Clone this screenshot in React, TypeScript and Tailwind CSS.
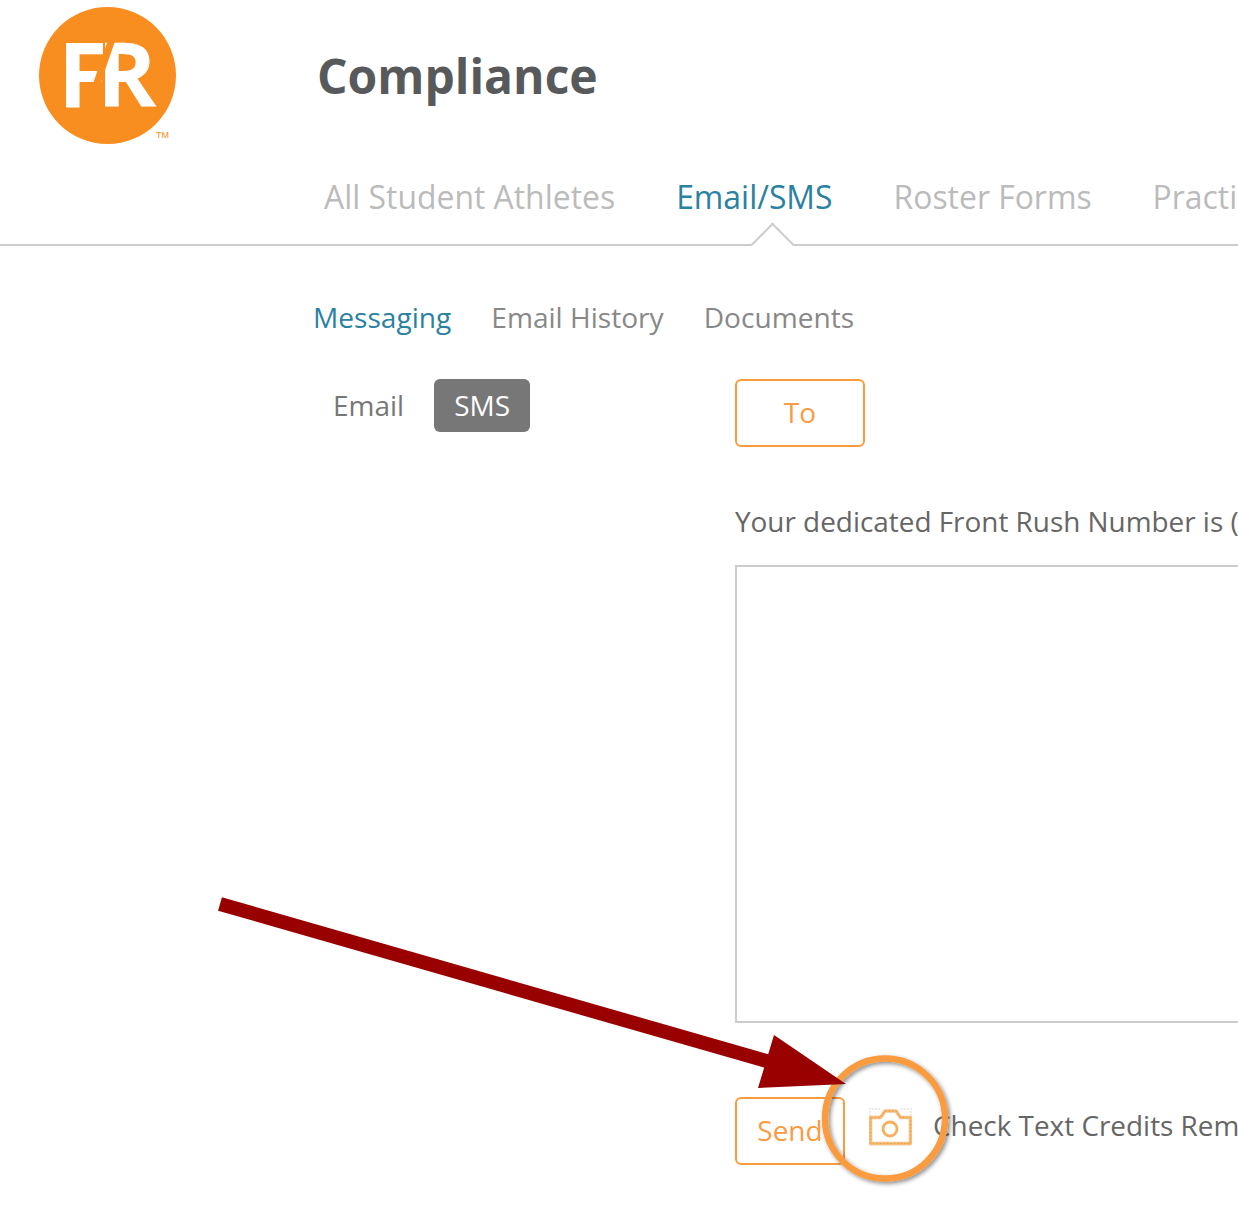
const orange = 'border-[#fb9b3f] text-[#fb9b3f]';

function Logo() {
  return (
    <div className="relative h-[137px] w-[137px] shrink-0 overflow-hidden rounded-full bg-[#f98e20] font-['Open_Sans',sans-serif] text-[90px] font-bold leading-none text-white">
      <span className="absolute left-[19px] top-[20px]">F</span>
      <span className="absolute left-[58px] top-[20px]">R</span>
      <span className="absolute left-[62px] top-[29px] h-[50px] w-[7px] rotate-[19deg] bg-[#f98e20]" />
    </div>
  );
}

function CameraIcon() {
  return (
    <svg width="43" height="38" viewBox="0 0 43 38" fill="none" className="shrink-0" aria-hidden>
      <path d="M1 8V1h10M32 1h10v7M1 37h41" stroke="#eeebe6" strokeWidth="2" strokeDasharray="2 1" />
      <path
        d="M1.500 9.500h10L16 3h11l4.500 6.500h10v26h-40z"
        fill="#fff"
        stroke="#f7c48a"
        strokeWidth="3.500"
        strokeLinejoin="round"
      />
      <path
        d="M1.500 9.500h10L16 3h11l4.500 6.500h10v26h-40z"
        stroke="#f2a54e"
        strokeWidth="1.500"
        strokeLinejoin="round"
        strokeDasharray="2.500 1"
      />
      <circle cx="21" cy="21" r="7" fill="none" stroke="#f5b160" strokeWidth="2.800" />
    </svg>
  );
}

function Annotation() {
  return (
    <svg width="1238" height="1217" className="pointer-events-none absolute left-0 top-0" aria-hidden>
      <defs>
        <filter id="ring-shadow" x="-20%" y="-20%" width="140%" height="140%">
          <feDropShadow dx="2" dy="2" stdDeviation="2" floodColor="#000" floodOpacity="0.45" />
        </filter>
      </defs>
      <circle cx="885" cy="1118.500" r="60" fill="none" stroke="#fb9b3f" strokeWidth="6.500" filter="url(#ring-shadow)" />
      <path d="M220 904 770 1062" stroke="#990000" strokeWidth="14" fill="none" />
      <path d="M774 1035 846 1084 758 1088z" fill="#990000" />
    </svg>
  );
}

export default function App() {
  return (
    <div className="relative h-[1217px] w-[1238px] overflow-hidden bg-white font-['Open_Sans',sans-serif]">
      <header className="relative flex h-[144px] items-center pl-[39px] pt-[7px]">
        <Logo />
        <h1 className="ml-[141px] text-[48px] font-bold leading-none text-[#58595b]">Compliance</h1>
        <span className="absolute left-[156px] top-[131px] font-['Liberation_Sans',sans-serif] text-[9px] leading-none text-[#f98e20]">
          TM
        </span>
      </header>

      <nav className="relative mt-[30px] flex h-[72px] gap-[61px] whitespace-nowrap border-b-2 border-[#ccc] pl-[324px] text-[31.900px] leading-[45px] text-[#bbb]">
        <span>All Student Athletes</span>
        <span className="text-[#2b81a1]">Email/SMS</span>
        <span>Roster Forms</span>
        <span>Practice</span>
        <span className="absolute left-[757px] top-[55px] h-[31px] w-[31px] rotate-45 border-l-2 border-t-2 border-[#ccc] bg-white" />
      </nav>

      <div className="mt-[52px] flex gap-10 pl-[313px] text-[28.100px] leading-[38px] text-[#888]">
        <span className="text-[#2b81a1]">Messaging</span>
        <span>Email History</span>
        <span>Documents</span>
      </div>

      <div className="mt-[43px] flex">
        <div className="flex w-[735px] shrink-0 items-start pl-[333px]">
          <span className="text-[28px] leading-[53px] text-[#777]">Email</span>
          <span className="ml-[30px] flex h-[53px] w-[96px] items-center justify-center rounded-md bg-[#777] pb-[2px] text-[28px] text-white">
            SMS
          </span>
        </div>
        <div className="w-[700px] shrink-0">
          <button className={`flex h-[68px] w-[130px] items-center justify-center rounded-md border-2 bg-white pb-[3px] text-[28px] ${orange}`}>
            To
          </button>
          <p className="mt-[54px] whitespace-nowrap text-[27.900px] leading-[40px] text-[#666]">
            Your dedicated Front Rush Number is (
          </p>
          <div className="mt-[24px] h-[458px] w-full border-2 border-[#ccc]" />
          <div className="mt-[74px] flex h-[68px] items-start">
            <button className={`flex h-[68px] w-[110px] items-center justify-center rounded-md border-2 bg-white pb-[2px] text-[28px] ${orange}`}>
              Send
            </button>
            <div className="ml-[24px] mt-[11px]">
              <CameraIcon />
            </div>
            <span className="ml-[21px] mt-[8px] whitespace-nowrap text-[27.900px] leading-[40px] text-[#666]">
              Check Text Credits Remaining
            </span>
          </div>
        </div>
      </div>

      <Annotation />
    </div>
  );
}
